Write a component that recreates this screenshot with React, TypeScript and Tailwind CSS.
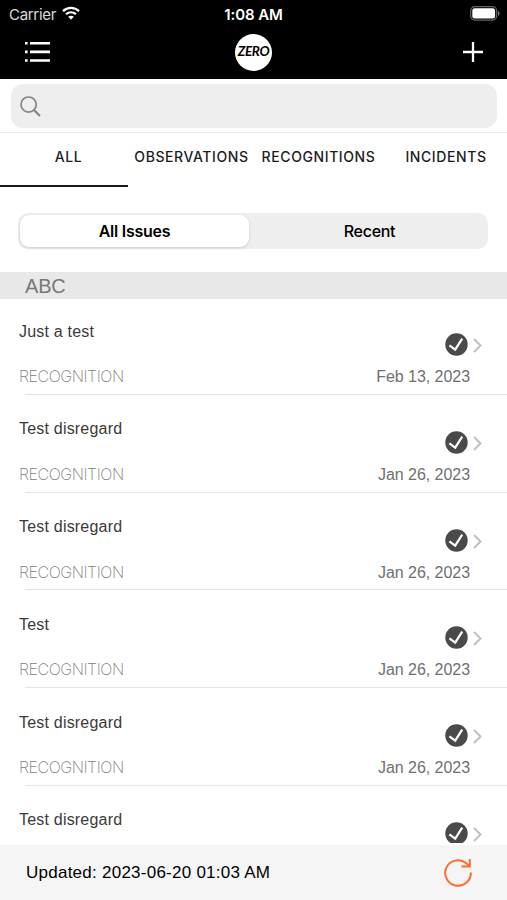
import { clsx } from "clsx";

const tabs = [
  { label: "ALL", width: "w-[128px] pl-[9px]" },
  { label: "OBSERVATIONS", width: "w-[127px]" },
  { label: "RECOGNITIONS", width: "w-[127px]" },
  { label: "INCIDENTS", width: "w-[128px]" },
];

type Issue = { title: string; kind?: string; date?: string };

const issues: Issue[] = [
  { title: "Just a test", kind: "RECOGNITION", date: "Feb 13, 2023" },
  { title: "Test disregard", kind: "RECOGNITION", date: "Jan 26, 2023" },
  { title: "Test disregard", kind: "RECOGNITION", date: "Jan 26, 2023" },
  { title: "Test", kind: "RECOGNITION", date: "Jan 26, 2023" },
  { title: "Test disregard", kind: "RECOGNITION", date: "Jan 26, 2023" },
  { title: "Test disregard" },
];

function StatusBar() {
  return (
    <div className="flex h-7 items-center pl-[9px] pr-[7px] text-[15px] leading-none text-white">
      <div className="flex flex-1 items-center gap-[6px]">
        <span className="tracking-[-0.3px] text-white/85">Carrier</span>
        <svg width="18" height="14" viewBox="0 0 18 14" fill="none" className="-mt-0.5">
          <path d="M1 5.1C5.6.7 12.4.7 17 5.1" stroke="#fff" strokeWidth="2.3" />
          <path d="M4 8.3c2.9-2.7 7.1-2.7 10 0" stroke="#fff" strokeWidth="2.2" />
          <path d="M9 13.8l-2.8-3c1.6-1.4 4-1.4 5.6 0z" fill="#fff" />
        </svg>
      </div>
      <span className="mr-[2px] font-semibold tracking-[-0.1px]">1:08 AM</span>
      <div className="flex flex-1 justify-end">
        <svg width="30" height="15" viewBox="0 0 30 15" className="-mt-0.5">
          <rect x="0.7" y="0.7" width="26" height="13.4" rx="4" fill="none" stroke="#666" strokeWidth="1.2" />
          <rect x="2.3" y="2.3" width="22.8" height="10.2" rx="2.5" fill="#fff" />
          <path d="M28 5c2.1.6 2.1 4.3 0 4.9z" fill="#777" />
        </svg>
      </div>
    </div>
  );
}

function NavBar() {
  return (
    <div className="flex h-[51px] items-center justify-between pl-[25px] pr-[24px]">
      <svg width="26" height="22" viewBox="0 0 26 22" className="-mt-[3px]" fill="#fff">
        <path d="M0 1h2.6v2.6H0zM5 1h20v2.6H5zM0 9.6h2.6v2.6H0zM5 9.6h20v2.6H5zM0 18.2h2.6v2.6H0zM5 18.2h20v2.6H5z" />
      </svg>
      <div className="-mt-[3px] mr-[7px] flex size-[37px] items-center justify-center rounded-full bg-white">
        <span className="font-['Lato',sans-serif] text-[13.5px] font-bold italic leading-none tracking-[-0.35px] text-black">
          ZERO
        </span>
      </div>
      <svg width="20" height="20" viewBox="0 0 20 20" className="-mt-[3px]" stroke="#fff" strokeWidth="2.3">
        <path d="M10 0v20M0 10h20" />
      </svg>
    </div>
  );
}

function SearchBar() {
  return (
    <div className="h-[54px] border-b border-[#ececec] pl-[11px] pr-[10px] pt-[5px]">
      <div className="flex h-11 items-center rounded-xl bg-[#eee] pl-[9px]">
        <svg width="21" height="21" viewBox="0 0 21 21" fill="none" stroke="#858585">
          <circle cx="8.6" cy="8.6" r="7.6" strokeWidth="1.7" />
          <path d="M14 14l6 6" strokeWidth="2.2" />
        </svg>
      </div>
    </div>
  );
}

function Tabs() {
  return (
    <div className="flex h-[54px] overflow-hidden">
      {tabs.map((tab, i) => (
        <div
          key={tab.label}
          className={clsx(
            "flex shrink-0 justify-center whitespace-nowrap pt-[14px] text-[14px] font-medium leading-5 tracking-[0.6px] text-[#1c1c1e]",
            tab.width,
            i === 0 && "border-b-2 border-[#1c1c1e]"
          )}
        >
          {tab.label}
        </div>
      ))}
    </div>
  );
}

function Segmented() {
  return (
    <div className="mx-[18px] mt-[26px] flex h-9 w-[470px] rounded-[10px] bg-[#eee] p-[2px] text-[16px] text-black">
      <div className="flex w-[229px] items-center justify-center rounded-[9px] bg-white font-semibold tracking-[-0.25px] shadow-[0_1px_3px_rgba(0,0,0,0.15)]">
        All Issues
      </div>
      <div className="flex flex-1 items-center justify-center pl-[4px] font-medium tracking-[-0.3px]">
        Recent
      </div>
    </div>
  );
}

function IssueRow({ title, kind, date }: Issue) {
  return (
    <div className="relative h-[97.75px] shrink-0 pl-[19px] pt-[23.5px] font-['Liberation_Sans',sans-serif]">
      <p className="text-[16px] leading-[22px] tracking-[0.2px] text-[#3a3a3a]">{title}</p>
      {kind && (
        <div className="mt-[22.5px] flex justify-between pr-[37px] text-[16px] leading-[22px]">
          <span className="font-['Inter',sans-serif] font-extralight tracking-[-0.45px] text-[#808080]">
            {kind}
          </span>
          <span className="pt-px tracking-[-0.05px] text-[#707070]">{date}</span>
        </div>
      )}
      <div className="absolute right-[25px] top-[36px] flex items-center gap-[5px]">
        <svg width="23" height="23" viewBox="0 0 23 23" fill="none">
          <circle cx="11.5" cy="11.5" r="11.2" fill="#4a4a4a" />
          <path d="M4.4 12.4l5.8 4.3 7-11" stroke="#fff" strokeWidth="2.2" />
        </svg>
        <svg width="9" height="15" viewBox="0 0 9 15" fill="none" className="mt-[2px]">
          <path d="M1 1l6.5 6.5L1 14" stroke="#c0c0c0" strokeWidth="2" />
        </svg>
      </div>
      {kind && <div className="absolute bottom-0 left-[25px] right-0 h-px bg-[#e4e4e4]" />}
    </div>
  );
}

function Footer() {
  return (
    <div className="flex h-[55px] items-center justify-between bg-[#f5f5f5] pl-[26px] pr-[34px]">
      <span className="pt-px font-['Liberation_Sans',sans-serif] text-[17px] tracking-[0.25px] text-black">
        Updated: 2023-06-20 01:03 AM
      </span>
      <svg width="30" height="30" viewBox="0 0 30 30" fill="none" stroke="#ff6b2c" strokeWidth="2">
        <path d="M27.8 14.5A12.8 12.8 0 1 1 22 4.3L26.4 8" />
        <path d="M26.8 1v7.6h-8.4" />
      </svg>
    </div>
  );
}

export default function App() {
  return (
    <div className="flex h-[900px] w-[507px] flex-col overflow-hidden bg-white font-['Inter',sans-serif]">
      <header className="h-[79px] shrink-0 bg-black">
        <StatusBar />
        <NavBar />
      </header>
      <SearchBar />
      <Tabs />
      <Segmented />
      <main className="mt-[23px] flex h-[571px] flex-col overflow-hidden">
        <h2 className="h-[27px] shrink-0 bg-[#e8e8e8] pl-[25px] font-['Liberation_Sans',sans-serif] text-[20px] leading-[28px] tracking-[-0.2px] text-[#777]">
          ABC
        </h2>
        <div className="-mt-0.5 flex flex-col">
          {issues.map((issue, i) => (
            <IssueRow key={i} {...issue} />
          ))}
        </div>
      </main>
      <div className="mt-auto">
        <Footer />
      </div>
    </div>
  );
}
